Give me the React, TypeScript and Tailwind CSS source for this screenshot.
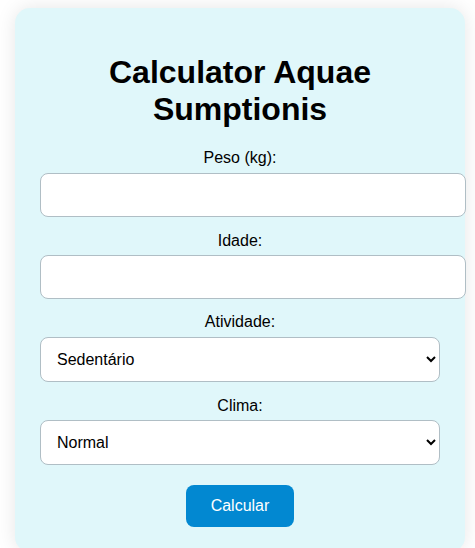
import { useState } from "react";

export default function App() {
  const [peso, setPeso] = useState("");
  const [idade, setIdade] = useState("");
  const [atividade, setAtividade] = useState("sedentario");
  const [clima, setClima] = useState("normal");

  return (
    <div className="min-h-[548px] bg-white font-['Liberation_Sans',Arial,sans-serif] text-black">
      <div className="ml-[15px] mt-[8px] w-[450px] rounded-[15px] bg-[#e0f7fa] px-[25px] pt-[25px] pb-[25px] text-center shadow-[0_0_20px_rgba(0,0,0,0.1)]">
        <h1 className="my-[21.44px] text-[32px] font-bold leading-[36.8px]">
          Calculator Aquae Sumptionis
        </h1>

        <label className="mb-[5px] block text-base leading-[18.4px]">Peso (kg):</label>
        <input
          type="number"
          value={peso}
          onChange={(e) => setPeso(e.target.value)}
          className="mb-[15px] box-content block h-[18px] w-full rounded-lg border border-[#b0bec5] bg-white p-3 text-base outline-none"
        />

        <label className="mb-[5px] block text-base leading-[18.4px]">Idade:</label>
        <input
          type="number"
          value={idade}
          onChange={(e) => setIdade(e.target.value)}
          className="mb-[14px] box-content block h-[18px] w-full rounded-lg border border-[#b0bec5] bg-white p-3 text-base outline-none"
        />

        <label className="mb-[5px] block text-base leading-[18.4px]">Atividade:</label>
        <select
          value={atividade}
          onChange={(e) => setAtividade(e.target.value)}
          className="mb-[15px] block h-[45px] w-full rounded-lg border border-[#b0bec5] bg-white px-3 text-base outline-none"
        >
          <option value="sedentario">Sedentário</option>
          <option value="moderado">Moderado</option>
          <option value="intenso">Intenso</option>
        </select>

        <label className="mb-[5px] block text-base leading-[18.4px]">Clima:</label>
        <select
          value={clima}
          onChange={(e) => setClima(e.target.value)}
          className="block h-[45px] w-full rounded-lg border border-[#b0bec5] bg-white px-3 text-base outline-none"
        >
          <option value="normal">Normal</option>
          <option value="quente">Quente</option>
          <option value="frio">Frio</option>
        </select>

        <button className="mt-5 h-[42px] w-[108px] rounded-lg bg-[#0288d1] text-base text-white">
          Calcular
        </button>
      </div>
    </div>
  );
}
